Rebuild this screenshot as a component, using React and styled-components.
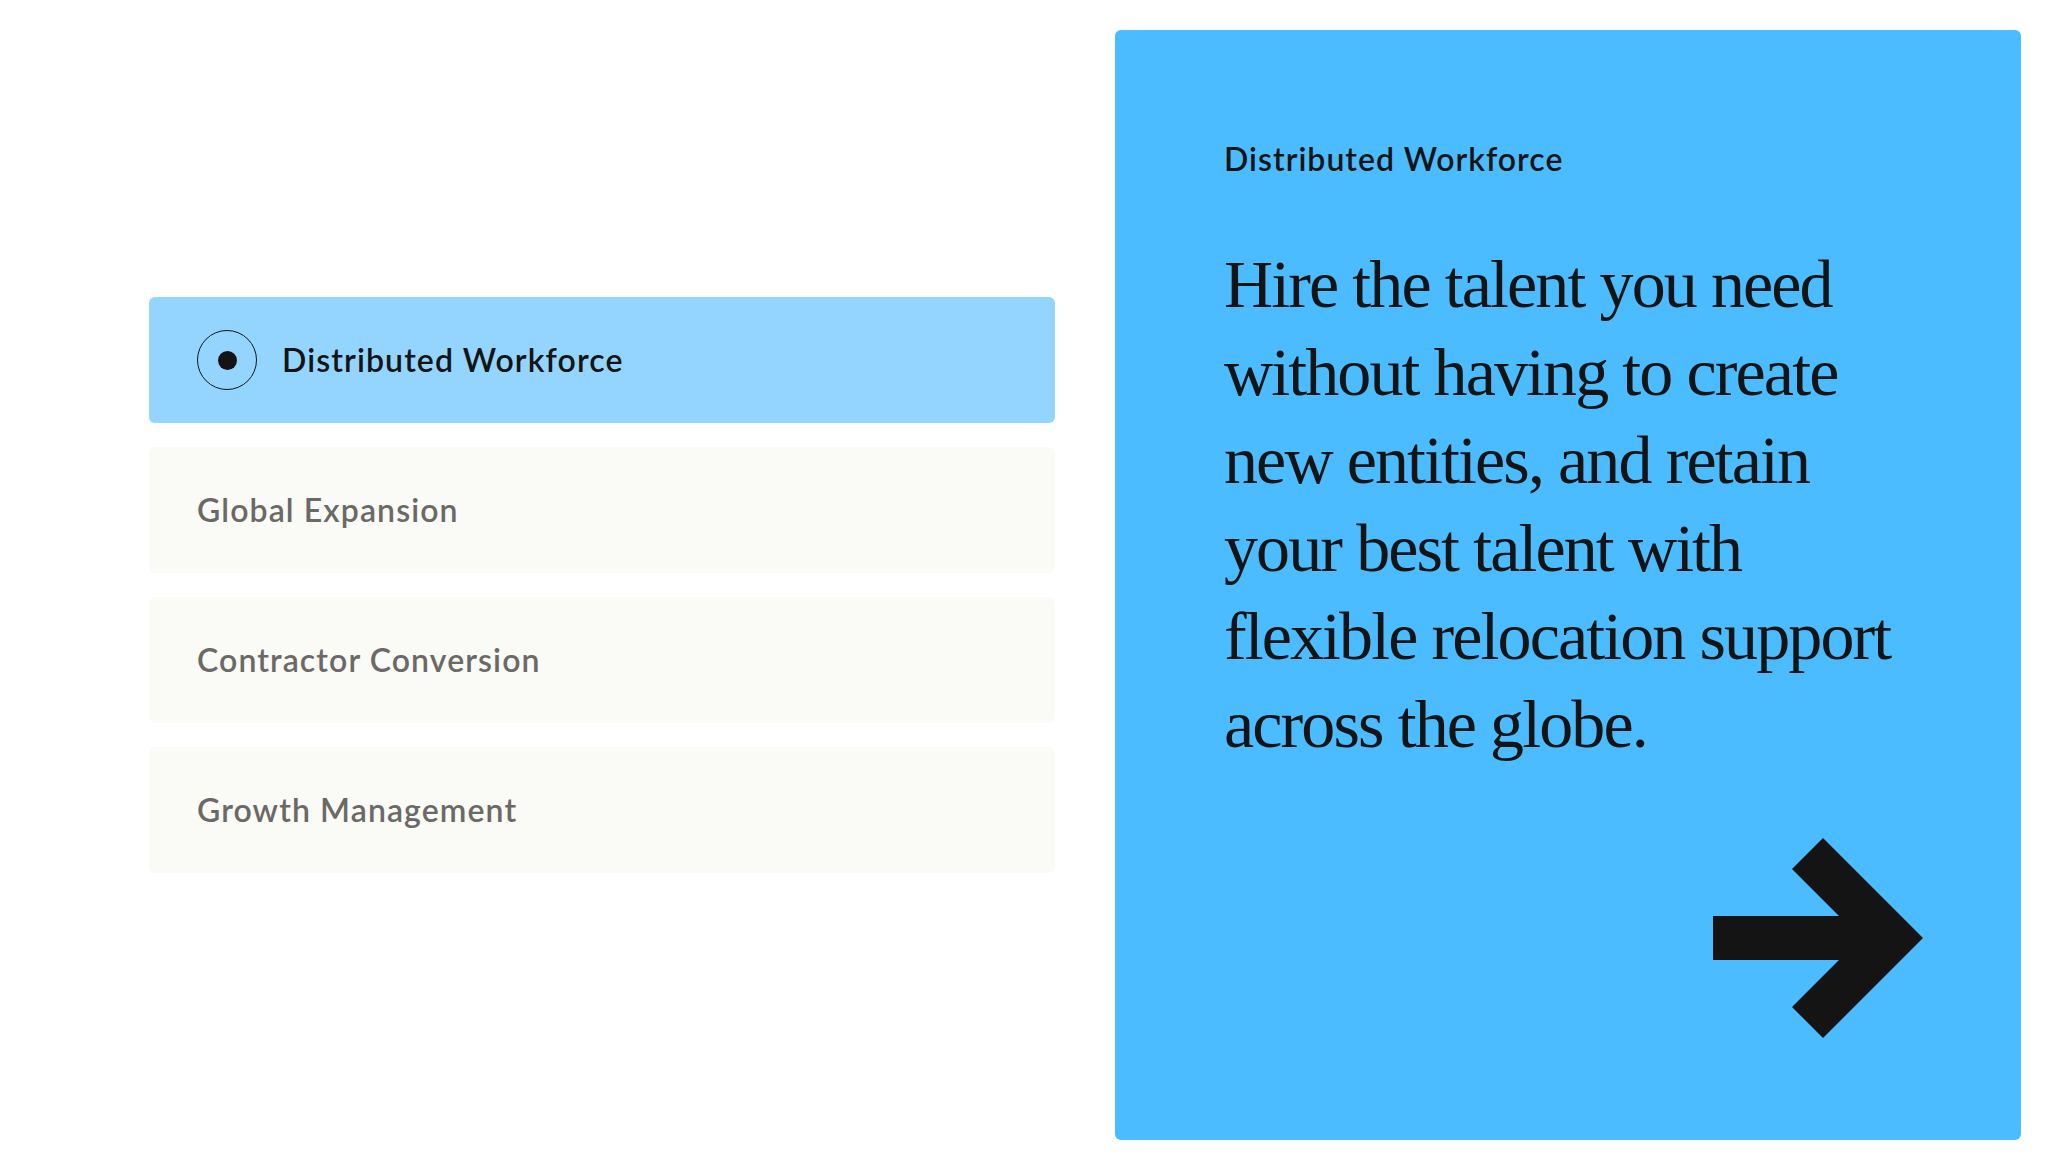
import React, { useState } from "react";
import styled, { createGlobalStyle } from "styled-components";

const GlobalStyle = createGlobalStyle`
  html, body {
    margin: 0;
    padding: 0;
    background: #fff;
  }
  body {
    font-family: Lato, "Noto Sans", sans-serif;
    color: #141414;
  }
`;

const Page = styled.div`
  display: grid;
  grid-template-columns: 906px 906px;
  column-gap: 60px;
  align-items: center;
  padding: 30px 45px 25px 149px;
`;

const TabList = styled.div`
  display: flex;
  flex-direction: column;
  gap: 24px;
`;

const Tab = styled.button`
  display: flex;
  align-items: center;
  gap: 25px;
  height: 126px;
  padding: 0 0 0 48px;
  border: none;
  border-radius: 6px;
  background: ${p => (p.$active ? "#93d5fe" : "#fafaf7")};
  color: ${p => (p.$active ? "#141414" : "#6b6966")};
  font-family: Lato, "Noto Sans", sans-serif;
  font-size: 32px;
  font-weight: 600;
  line-height: 1.2;
  letter-spacing: 1.1px;
  text-align: left;
  cursor: pointer;
`;

const Radio = styled.span`
  display: flex;
  align-items: center;
  justify-content: center;
  width: 60px;
  height: 60px;
  box-sizing: border-box;
  border: 1.5px solid #141414;
  border-radius: 50%;
  flex: 0 0 auto;
  &::after {
    content: "";
    width: 19px;
    height: 19px;
    border-radius: 50%;
    background: #141414;
  }
`;

const Panel = styled.section`
  display: flex;
  flex-direction: column;
  height: 1110px;
  box-sizing: border-box;
  padding: 110px 98px 102px 109px;
  border-radius: 6px;
  background: #4abcff;
`;

const PanelTitle = styled.h3`
  margin: 0;
  font-family: Lato, "Noto Sans", sans-serif;
  font-size: 32px;
  font-weight: 600;
  line-height: 1.2;
  letter-spacing: 1px;
  color: #141414;
`;

const PanelBody = styled.p`
  margin: 62px 0 0;
  font-family: "Liberation Serif", "Times New Roman", serif;
  font-size: 68px;
  font-weight: 400;
  line-height: 88px;
  letter-spacing: -1.9px;
  color: #141414;
`;

const ArrowLink = styled.a`
  display: block;
  margin-top: auto;
  align-self: flex-end;
  width: 210px;
  height: 200px;
  cursor: pointer;
`;

const Arrow = () => (
  <svg width="210" height="200" viewBox="0 0 210 200">
    <polygon
      points="0,78 126,78 79,31 110,0 210,100 110,200 79,169 126,122 0,122"
      fill="#141414"
    />
  </svg>
);

const tabs = [
  {
    label: "Distributed Workforce",
    body: [
      "Hire the talent you need",
      "without having to create",
      "new entities, and retain",
      "your best talent with",
      "flexible relocation support",
      "across the globe.",
    ],
  },
  {
    label: "Global Expansion",
    body: [
      "Enter new markets fast",
      "and build teams abroad",
      "without setting up",
      "local entities.",
    ],
  },
  {
    label: "Contractor Conversion",
    body: [
      "Turn your contractors",
      "into fully compliant",
      "employees in days,",
      "not months.",
    ],
  },
  {
    label: "Growth Management",
    body: [
      "Scale your team with",
      "payroll, benefits and",
      "compliance handled",
      "in one place.",
    ],
  },
];

export default function App() {
  const [active, setActive] = useState(0);
  const current = tabs[active];

  return (
    <>
      <GlobalStyle />
      <Page>
        <TabList>
          {tabs.map((tab, i) => (
            <Tab key={tab.label} $active={i === active} onClick={() => setActive(i)}>
              {i === active && <Radio />}
              {tab.label}
            </Tab>
          ))}
        </TabList>
        <Panel>
          <PanelTitle>{current.label}</PanelTitle>
          <PanelBody>
            {current.body.map((line, i) => (
              <React.Fragment key={i}>
                {line}
                {i < current.body.length - 1 && <br />}
              </React.Fragment>
            ))}
          </PanelBody>
          <ArrowLink aria-label="Learn more">
            <Arrow />
          </ArrowLink>
        </Panel>
      </Page>
    </>
  );
}
